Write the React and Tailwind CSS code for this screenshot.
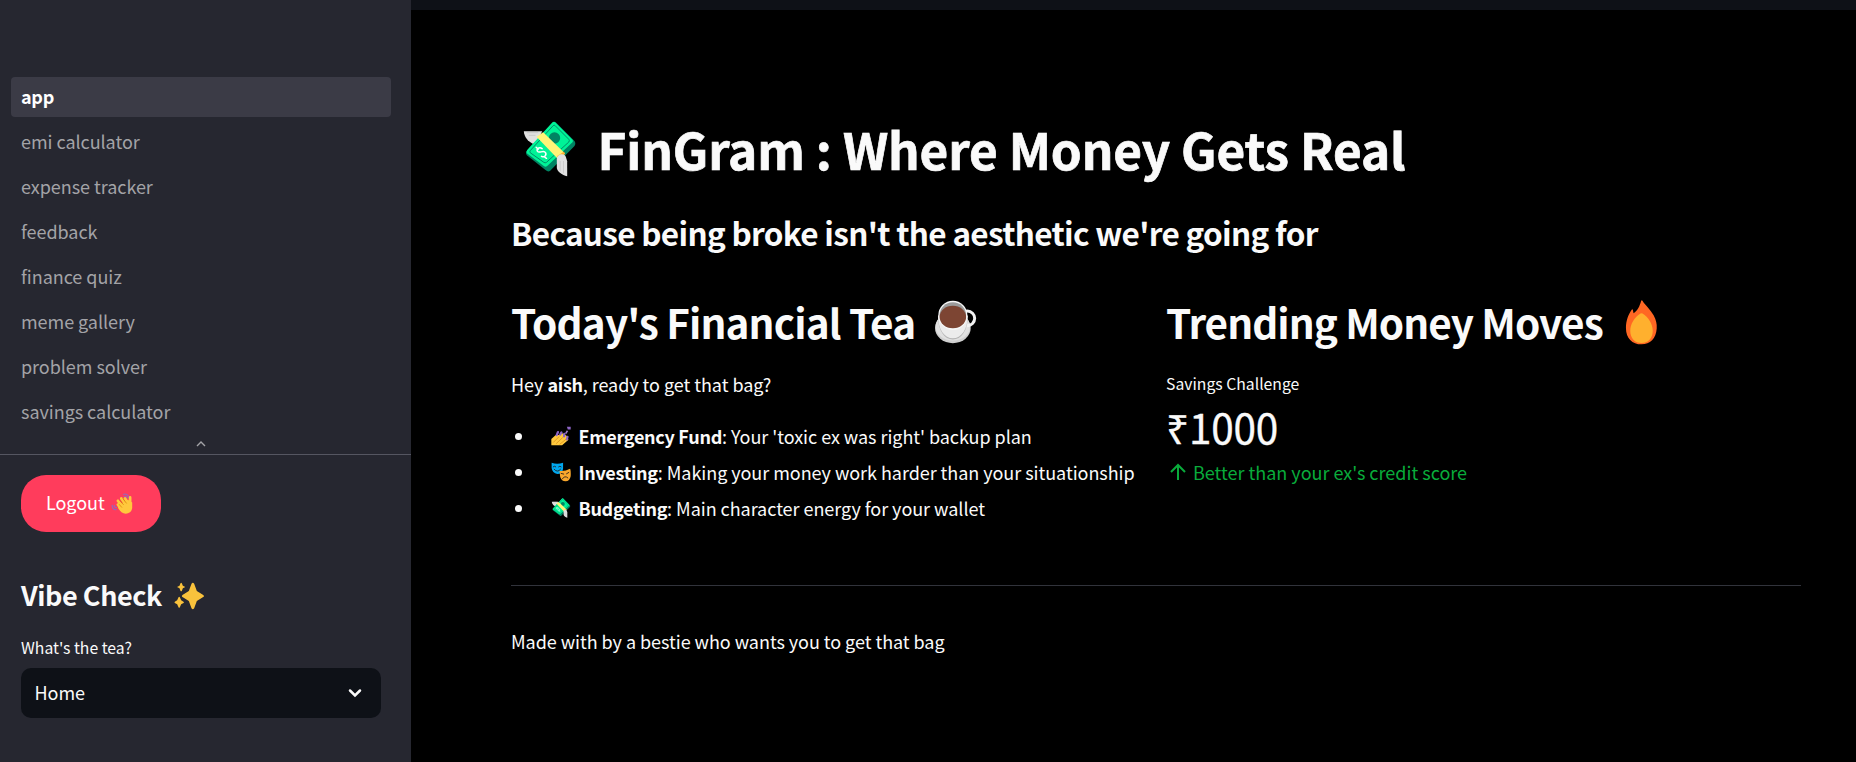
const NAV = ['emi calculator', 'expense tracker', 'feedback', 'finance quiz', 'meme gallery', 'problem solver', 'savings calculator'];

function Money({ className }) {
  return (
    <svg className={className} viewBox="9 35 158 168">
      <path d="M11 66H66L50 98 39 104C22 96 12 82 11 66Z" fill="#e0e0e0" />
      <path d="M20 70H54M26 78H46" stroke="#c4c4c4" strokeWidth="2.5" />
      <path d="M100 38Q104 36 108 40L163 95Q168 102 163 110L90 184Q84 189 77 183L20 138Q15 131 20 125Z" fill="#008463" />
      <path d="M97 39Q101 36 105 39L157 91Q160 95 157 99L81 170Q76 174 71 170L20 132Q17 127 21 122Z" fill="#00f397" />
      <path d="M99 49Q102 46 105 49L146 90Q149 94 146 98L79 159Q75 162 71 159L30 130Q28 127 31 123Z" fill="none" stroke="#008463" strokeWidth="2.8" />
      <circle cx="103" cy="86" r="17" fill="#008463" />
      <path d="M48 114L54 120M73 143L79 147M66 118C58 112 47 118 52 126C57 133 67 123 74 128C82 135 73 146 64 141" fill="none" stroke="#fff" strokeWidth="4.5" strokeLinecap="round" />
      <path d="M49 82L69 69L134 132L114 150Z" fill="#fff478" />
      <path d="M110 141L131 127L135 133L116 151Z" fill="#ffb02e" />
      <path d="M110 148C110 136 130 128 137 142L141 156V201C125 196 112 188 110 176Z" fill="#e1e1e1" />
      <path d="M120 155V186M130 155V192" stroke="#c8c8c8" strokeWidth="2.5" />
    </svg>
  );
}

function Coffee({ className }) {
  return (
    <svg className={className} viewBox="1300 62 130 132">
      <ellipse cx="1357" cy="146" rx="54" ry="46" fill="#cfcfcf" />
      <ellipse cx="1357" cy="142" rx="52" ry="42" fill="#e1e1e1" />
      <circle cx="1401" cy="117" r="22" fill="none" stroke="#f2f2f2" strokeWidth="9" />
      <path d="M1312 110C1312 155 1332 181 1357 181S1402 155 1402 110Z" fill="#b5b5b5" />
      <path d="M1312 108C1312 151 1332 177 1357 177S1402 151 1402 108Z" fill="#ececec" />
      <circle cx="1357" cy="108" r="44" fill="#f7f7f7" />
      <ellipse cx="1357" cy="107" rx="40" ry="39" fill="#9b9b9b" />
      <ellipse cx="1357" cy="113" rx="40" ry="34" fill="#7d4533" />
    </svg>
  );
}

function Fire({ className }) {
  return (
    <svg className={className} viewBox="1328 58 98 136">
      <path d="M1376 60Q1378 58 1380 60C1386 72 1403 84 1414 105C1421 119 1424 130 1423 144C1421 174 1403 192 1377 192C1349 192 1330 173 1330 143C1330 119 1338 101 1348 87Q1350 85 1351 88L1353 98C1365 90 1371 78 1376 60Z" fill="#ff6723" />
      <path d="M1374 99Q1377 97 1380 99C1398 110 1411 131 1411 151C1411 174 1397 188 1377 188S1343 174 1343 151C1343 131 1356 110 1374 99Z" fill="#ffb02e" />
    </svg>
  );
}

function Sparkles({ className }) {
  return (
    <svg className={className} viewBox="220 306 92 84" fill="#f9c23c">
      <path d="M272 311Q276 305 280 311L288 333 306 344Q313 348 306 352L288 363 280 385Q276 391 272 385L264 363 246 352Q240 348 246 344L264 333Z" />
      <path d="M239 310Q241 307 243 310L246 317 252 320Q254 321 252 322L246 325 243 333Q241 335 239 333L236 325 230 322Q228 321 230 320L236 317Z" />
      <path d="M233 352Q235 349 237 352L241 361 248 365Q251 367 248 369L241 373 237 382Q235 385 233 382L229 373 222 369Q220 367 222 365L229 361Z" />
    </svg>
  );
}

function Wave({ className }) {
  return (
    <svg className={className} viewBox="335 218 64 62">
      <path d="M371 222C378 219 387 224 387 232M373 228C378 226 381 229 382 233M338 254C337 262 343 268 350 267M344 254C344 259 347 261 351 261" fill="none" stroke="#8c6dc5" strokeWidth="3" strokeLinecap="round" />
      <path d="M355 252L364 266M355 241L368 257M365 234L377 252M376 234L384 247M391 231L391 249" stroke="#ffc83d" strokeWidth="8" strokeLinecap="round" />
      <path d="M361 252L384 238 397 246V262C396 273 387 279 378 279C369 279 360 272 355 261Z" fill="#ffc83d" />
      <path d="M361 240L371 252M370 235L380 248M359 252L366 260" stroke="#d67d00" strokeWidth="2" strokeLinecap="round" />
    </svg>
  );
}

function Nails({ className }) {
  return (
    <svg className={className} viewBox="151 440 63 61">
      <path d="M152 500V480L166 467H176L188 462 200 470 206 482 186 500Z" fill="#ffc83d" />
      <path d="M158 491L177 472M167 495L188 475M178 497L199 480" stroke="#d98f1c" strokeWidth="2.5" />
      <path d="M169 468L173 458M180 466L184 459M192 472L193 464M201 481L203 473" stroke="#8d65c5" strokeWidth="7" strokeLinecap="round" />
      <path d="M201 441H213V450H204Z" fill="#8d65c5" />
      <path d="M203 454L197 463" stroke="#a27ad0" strokeWidth="5" />
    </svg>
  );
}

function Masks({ className }) {
  return (
    <svg className={className} viewBox="151 548 63 61">
      <path d="M153 549Q170 556 189 549V568Q187 585 171 585Q155 582 153 566Z" fill="#00a6ed" />
      <path d="M158 562Q162 558 166 562M175 562Q179 558 183 562M161 570Q171 582 181 570" fill="none" stroke="#212121" strokeWidth="2.8" strokeLinecap="round" />
      <path d="M178 575Q195 577 211 568Q214 572 213 592Q210 607 197 608Q184 607 180 594Z" fill="#f9a72c" />
      <path d="M183 583L191 585M200 584L207 580M187 600Q194 588 204 597" fill="none" stroke="#3b2a1a" strokeWidth="3" strokeLinecap="round" />
    </svg>
  );
}

const TIPS = [
  { Icon: Nails, name: 'Emergency Fund', text: "Your 'toxic ex was right' backup plan" },
  { Icon: Masks, name: 'Investing', text: 'Making your money work harder than your situationship' },
  { Icon: Money, name: 'Budgeting', text: 'Main character energy for your wallet' },
];

function Sidebar() {
  return (
    <aside className="flex w-[411px] shrink-0 flex-col bg-[#262730]">
      <nav className="mt-[77px] flex flex-col gap-[5px] pl-[11px] pr-5">
        <a className="flex h-10 items-center rounded bg-[#3b3b46] pb-0.5 pl-2.5 font-bold tracking-[-0.3px] text-white">app</a>
        {NAV.map((n) => (
          <a key={n} className="flex h-10 items-center pb-0.5 pl-2.5 text-[#a3a3a7]">{n}</a>
        ))}
      </nav>
      <div className="flex h-[23px] items-center justify-center border-b border-[#555661] pr-[9px] pt-0.5">
        <svg width="10" height="6" viewBox="0 0 10 6" fill="none" stroke="#a3a3a7" strokeWidth="1.4"><path d="M1 5l4-4 4 4" /></svg>
      </div>
      <button className="ml-[21px] mt-5 flex h-[57px] w-[140px] items-center rounded-[25px] bg-[#ff3c5c] pl-[25px] text-white">
        <span className="pb-[3px]">Logout</span>
        <Wave className="ml-1.5 h-[21px] w-[22px]" />
      </button>
      <h2 className="mt-[43px] ml-[21px] flex items-center text-[27px] leading-10 font-semibold tracking-[-0.45px]">
        Vibe Check
        <Sparkles className="mt-px ml-[12px] h-7 w-[31px]" />
      </h2>
      <label className="mt-[21px] ml-[21px] text-[15.75px] leading-6 tracking-normal">What's the tea?</label>
      <div className="mx-[21px] mt-[8px] flex h-[50px] w-[360px] items-center justify-between rounded-[10px] bg-[#0e1117] pl-[13.5px] pr-[19px]">
        <span className="pb-0.5">Home</span>
        <svg width="14" height="10" viewBox="0 0 14 10" fill="none" stroke="#fafafa" strokeWidth="2.5" strokeLinecap="round"><path d="M2 2.5l5 5 5-5" /></svg>
      </div>
    </aside>
  );
}

export default function App() {
  return (
    <div className="flex h-[762px] w-[1856px] overflow-hidden bg-black font-['Noto_Sans_CJK_SC','Noto_Sans',sans-serif] text-[18px] leading-[30px] tracking-[-0.045px] text-[#fafafa]">
      <Sidebar />
      <main className="flex flex-1 flex-col">
        <div className="h-[10px] bg-[#0e1117]" />
        <div className="flex flex-col pl-[100px] pr-[55px]">
          <h1 className="mt-[106px] flex items-center pl-3 text-[49.5px] leading-[66px] font-bold tracking-[-0.14px] [-webkit-text-stroke:0.7px_#fafafa]">
            <Money className="mr-[21.5px] h-14 w-[53px]" />
            FinGram : Where Money Gets Real
          </h1>
          <h3 className="mt-[29px] text-[31.5px] leading-[42px] font-semibold tracking-[-0.68px]">Because being broke isn't the aesthetic we're going for</h3>
          <div className="mt-[42px] flex">
            <section className="w-[655px]">
              <h2 className="flex items-center text-[40.5px] leading-[54px] font-semibold tracking-[-0.86px]">
                Today's Financial Tea
                <Coffee className="ml-[18.5px] h-11 w-[43px]" />
              </h2>
              <p className="mt-[20px]">Hey <b className="tracking-[-0.3px]">aish</b>, ready to get that bag?</p>
              <ul className="mt-[19px] flex flex-col">
                {TIPS.map(({ Icon, name, text }) => (
                  <li key={name} className="flex h-9 items-center">
                    <span className="ml-1 size-[7px] rounded-full bg-[#fafafa]" />
                    <Icon className="mr-[7.5px] ml-[29px] size-[20px]" />
                    <span><b className="tracking-[-0.3px]">{name}</b>: {text}</span>
                  </li>
                ))}
              </ul>
            </section>
            <section>
              <h2 className="flex items-center text-[40.5px] leading-[54px] font-semibold tracking-[-0.94px]">
                Trending Money Moves
                <Fire className="ml-[22px] h-[45px] w-[33px]" />
              </h2>
              <p className="mt-[22px] text-[15.75px] leading-[26px] tracking-normal">Savings Challenge</p>
              <p className="mt-[3px] text-[40.5px] leading-[54px] tracking-[-0.2px] [-webkit-text-stroke:0.3px_#fafafa]">₹1000</p>
              <p className="mt-[3px] flex items-center tracking-normal text-[#09ab3b]">
                <svg className="mr-[7px] ml-1" width="16" height="18" viewBox="0 0 16 18" fill="none" stroke="currentColor" strokeWidth="2"><path d="M8 17V2M1 9l7-7 7 7" /></svg>
                Better than your ex's credit score
              </p>
            </section>
          </div>
          <hr className="mt-[59px] border-[#31333b]" />
          <p className="mt-[40px]">Made with by a bestie who wants you to get that bag</p>
        </div>
      </main>
    </div>
  );
}
